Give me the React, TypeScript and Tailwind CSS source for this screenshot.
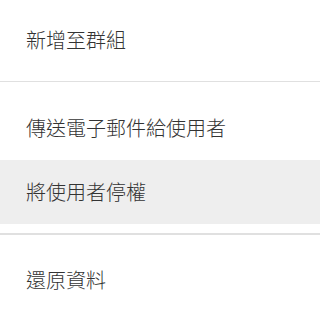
const items = [
  { label: '新增至群組' },
  { label: '傳送電子郵件給使用者' },
  { label: '將使用者停權' },
  { label: '還原資料' },
]

function MenuItem({ label, active }: { label: string; active?: boolean }) {
  return (
    <div
      className={`h-16 flex items-center px-[26px] text-[20px] font-light text-[#333333] ${active ? 'bg-[#eeeeee]' : ''}`}
    >
      {label}
    </div>
  )
}

export default function App() {
  return (
    <div
      className="w-[320px] h-[318px] bg-white py-2 overflow-hidden"
      style={{ fontFamily: '"Noto Sans CJK TC", "Noto Sans", sans-serif' }}
    >
      <MenuItem label={items[0].label} />
      <div className="mt-[9px] mb-[14px] h-px bg-[#e0e0e0]" />
      <MenuItem label={items[1].label} />
      <MenuItem label={items[2].label} active />
      <div className="mt-[9px] mb-[13px] h-[2px] bg-[#e0e0e0]" />
      <MenuItem label={items[3].label} />
    </div>
  )
}
